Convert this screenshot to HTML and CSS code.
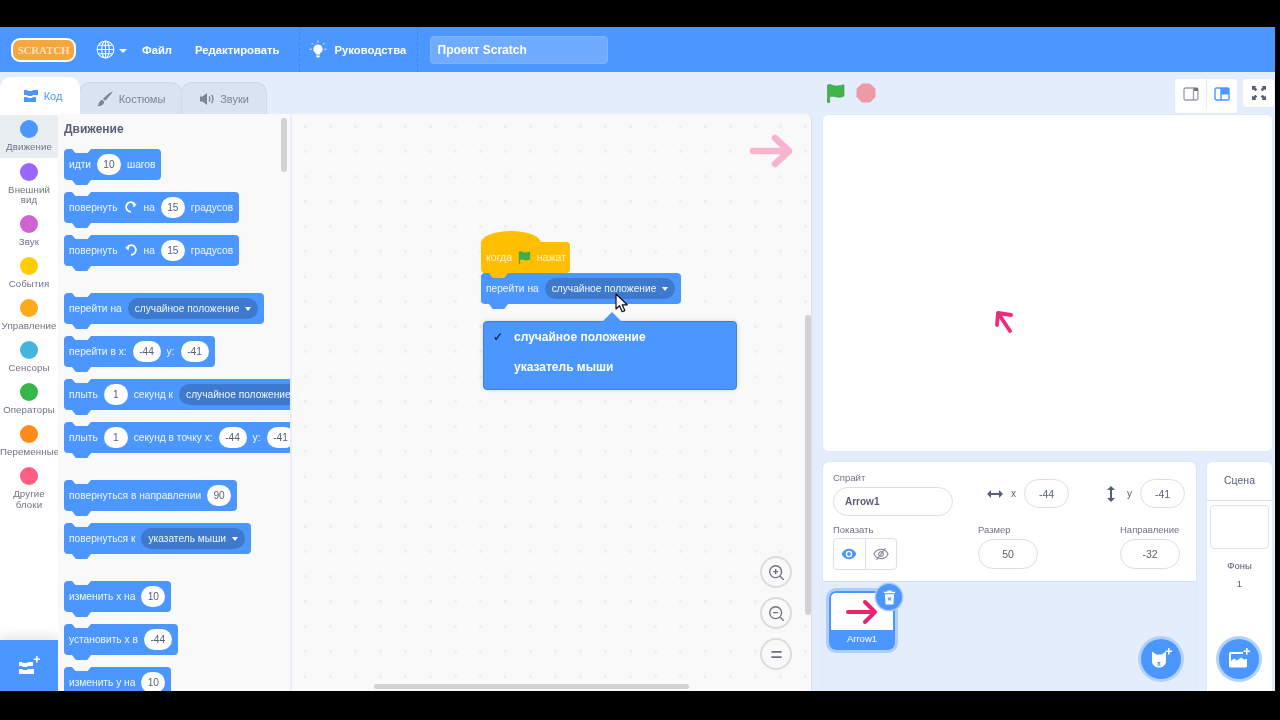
FILE: index.html
```html
<!DOCTYPE html>
<html lang="ru">
<head>
    <meta charset="UTF-8">
    <meta name="viewport" content="width=device-width, initial-scale=1.0">
    <title>Scratch</title>
    <link rel="stylesheet" href="styles.css">
</head>
<body>
<div class="app">
    <!-- Menu bar -->
    <header class="menu-bar">
        <span class="logo">SCRATCH</span>
        <span class="globe">
            <svg width="19" height="19" viewBox="0 0 20 20" fill="none" stroke="#fff" stroke-width="1.1"><circle cx="10" cy="10" r="8.8"/><ellipse cx="10" cy="10" rx="4" ry="8.8"/><path d="M10 1.2v17.6M1.2 10h17.6M2.4 5.6h15.2M2.4 14.4h15.2"/></svg>
            <i class="caret"></i>
        </span>
        <a class="menu-item file">Файл</a>
        <a class="menu-item edit">Редактировать</a>
        <div class="tutorials">
            <svg width="18" height="20" viewBox="0 0 18 20"><path d="M9 4.5a4.6 4.6 0 0 0-2.7 8.3c.6.5.7 1 .7 1.7h4c0-.7.1-1.2.7-1.7A4.6 4.6 0 0 0 9 4.5zM7.2 15.4h3.6v1.1l-.9 1h-1.8l-.9-1z" fill="#fff"/><path d="M9 .6v2M2.6 3l1.3 1.4M15.4 3l-1.3 1.4M.6 9.2h2M15.4 9.2h2" stroke="#fff" stroke-width="1"/></svg>
            <a class="menu-item">Руководства</a>
        </div>
        <div class="project-name">Проект Scratch</div>
    </header>

    <div class="workarea">
        <!-- Left: editor -->
        <section class="editor">
            <nav class="tabs">
                <a class="tab active">
                    <svg width="16" height="12" viewBox="0 0 16 12" fill="#4c97ff"><path d="M1 0h3l1 1h4l1-1h5v5H10l-1 1H5L4 5H1zM1 7h3l1 1h4l1-1h3v5H1z"/></svg>
                    Код
                </a>
                <a class="tab costumes">
                    <svg width="18" height="18" viewBox="0 0 18 18" fill="#7f8590"><path d="M16.5 1.5c.4.4-4.4 6.700-7.500 9.300l-2-2c2.700-3.100 9.100-7.700 9.500-7.300zM6.300 9.800l1.900 1.900c-.2 3.100-3.600 4.800-6.700 4.300 1.800-1.200 1-5.600 4.800-6.200z"/></svg>
                    Костюмы
                </a>
                <a class="tab sounds">
                    <svg width="16" height="14" viewBox="0 0 16 14"><path d="M1 4.500h2.500L8 1v12L3.500 9.500H1z" fill="#7f8590"/><path d="M10 4.500c1 1.400 1 3.600 0 5M12.500 3c1.700 2.300 1.700 5.700 0 8" fill="none" stroke="#7f8590" stroke-width="1.300"/></svg>
                    Звуки
                </a>
            </nav>
            <div class="editor-body">
                <aside class="categories">
                    <div class="category selected"><i class="dot motion"></i><span>Движение</span></div>
                    <div class="category"><i class="dot looks"></i><span>Внешний вид</span></div>
                    <div class="category"><i class="dot sound"></i><span>Звук</span></div>
                    <div class="category"><i class="dot events"></i><span>События</span></div>
                    <div class="category"><i class="dot control"></i><span>Управление</span></div>
                    <div class="category"><i class="dot sensing"></i><span>Сенсоры</span></div>
                    <div class="category"><i class="dot operators"></i><span>Операторы</span></div>
                    <div class="category"><i class="dot variables"></i><span>Переменные</span></div>
                    <div class="category"><i class="dot myblocks"></i><span>Другие блоки</span></div>
                    <div class="extensions">
                        <svg width="22" height="20" viewBox="0 0 22 20" fill="#fff"><path d="M1 6h3l1 1h4l1-1h5v4h-5l-1 1H5l-1-1H1zM1 13h3l1 1h4l1-1h6v5H1z"/><path d="M18 0h1.600v2.400H22V4h-2.400v2.400H18V4h-2.400V2.400H18z"/></svg>
                    </div>
                </aside>
                <div class="flyout">
                    <div class="flyout-title">Движение</div>
                    <div class="block"><span>идти</span><b class="num">10</b><span>шагов</span></div>
                    <div class="block"><span>повернуть</span>
                        <svg width="14" height="14" viewBox="0 0 16 15" fill="none" stroke="#fff" stroke-width="2"><path d="M12.500 4.500A5.500 5.500 0 1 0 8 13"/><path d="M9 1.500l5.500 3-3.500 3.500z" fill="#fff" stroke="none"/></svg>
                        <span>на</span><b class="num">15</b><span>градусов</span></div>
                    <div class="block group-end"><span>повернуть</span>
                        <svg width="14" height="14" viewBox="0 0 16 15" fill="none" stroke="#fff" stroke-width="2"><path d="M3.500 4.500A5.500 5.500 0 1 1 8 13"/><path d="M7 1.500l-5.500 3L5 8z" fill="#fff" stroke="none"/></svg>
                        <span>на</span><b class="num">15</b><span>градусов</span></div>
                    <div class="block"><span>перейти на</span><b class="drop">случайное положение<i class="caret"></i></b></div>
                    <div class="block"><span>перейти в x:</span><b class="num wide">-44</b><span>y:</span><b class="num wide">-41</b></div>
                    <div class="block"><span>плыть</span><b class="num">1</b><span>секунд к</span><b class="drop">случайное положение<i class="caret"></i></b></div>
                    <div class="block group-end"><span>плыть</span><b class="num">1</b><span>секунд в точку x:</span><b class="num wide">-44</b><span>y:</span><b class="num wide">-41</b></div>
                    <div class="block"><span>повернуться в направлении</span><b class="num">90</b></div>
                    <div class="block group-end"><span>повернуться к</span><b class="drop">указатель мыши<i class="caret"></i></b></div>
                    <div class="block"><span>изменить х на</span><b class="num">10</b></div>
                    <div class="block"><span>установить х в</span><b class="num wide">-44</b></div>
                    <div class="block"><span>изменить у на</span><b class="num">10</b></div>
                    <i class="flyout-scroll"></i>
                </div>
                <div class="workspace">
                    <svg class="ghost-arrow" width="44" height="34" viewBox="0 0 44 34" fill="none" stroke="#f6b4ce" stroke-width="6.500" stroke-linecap="round" stroke-linejoin="round"><path d="M4 17h36M26 4l14 13-14 13"/></svg>
                    <div class="script">
                        <div class="block hat"><span>когда</span>
                            <svg width="15" height="15" viewBox="0 0 16 16"><path d="M2 1.500c3-1.500 5 1.500 7.500 1 2 0 3.500-.5 5-1v8.500c-2 1.500-4 1.500-6 1-2-.7-4-1-5-.2V15.500H2z" fill="#3fae4a"/></svg>
                            <span>нажат</span></div>
                        <div class="block attached"><span>перейти на</span><b class="drop">случайное положение<i class="caret"></i></b></div>
                    </div>
                    <div class="dropdown">
                        <div class="dropdown-item"><span class="check">✓</span>случайное положение</div>
                        <div class="dropdown-item"><span class="check"></span>указатель мыши</div>
                    </div>
                    <svg class="cursor" width="14" height="20" viewBox="0 0 14 20"><path d="M1 1v15l3.600-3.300 2.600 6 2.600-1.100-2.600-5.800h5z" fill="#fff" stroke="#111" stroke-width="1.200" stroke-linejoin="round"/></svg>
                    <div class="zoom-buttons">
                        <a class="zoom-btn"><svg width="17" height="17" viewBox="0 0 20 20" fill="none" stroke="#6b7280" stroke-width="1.600"><circle cx="9" cy="9" r="7"/><path d="M14 14l4.500 4.500M9 6v6M6 9h6"/></svg></a>
                        <a class="zoom-btn"><svg width="17" height="17" viewBox="0 0 20 20" fill="none" stroke="#6b7280" stroke-width="1.600"><circle cx="9" cy="9" r="7"/><path d="M14 14l4.500 4.500M6 9h6"/></svg></a>
                        <a class="zoom-btn"><svg width="17" height="17" viewBox="0 0 20 20" fill="none" stroke="#6b7280" stroke-width="2"><path d="M4 7h12M4 13h12"/></svg></a>
                    </div>
                    <i class="scroll-v"></i>
                    <i class="scroll-h"></i>
                </div>
            </div>
        </section>

        <!-- Right: stage and sprites -->
        <section class="side">
            <div class="stage-header">
                <div class="stage-controls">
                    <svg width="20" height="20" viewBox="0 0 20 20"><path d="M1.500 2c3.500-1.500 5.500 1.500 9 1 2.500 0 5-.6 7.500-1.300V13c-3 1.400-5.500 1.500-8 .8-2.500-.6-5-1-6.300 0V19.500H1.500z" fill="#3fb54a" stroke="#2f9a3c" stroke-width=".6"/></svg>
                    <svg width="20" height="20" viewBox="0 0 20 20"><path d="M6 .500h8L19.500 6v8L14 19.500H6L.5 14V6z" fill="#ec9aa6"/></svg>
                </div>
                <div class="view-buttons">
                    <div class="btn-group">
                        <a class="view-btn"><svg width="16" height="14" viewBox="0 0 16 14" fill="none" stroke="#9a9ea8" stroke-width="1.300"><rect x="1" y="1" width="14" height="12" rx="1.500"/><path d="M10.500 1h4.500v3h-4.500z" fill="#6d717a" stroke="none"/><path d="M10.500 1v12"/></svg></a>
                        <a class="view-btn"><svg width="16" height="14" viewBox="0 0 16 14" fill="none" stroke="#4c97ff" stroke-width="1.400"><rect x="1" y="1" width="14" height="12" rx="1.500"/><path d="M7 1h8v6.500H7z" fill="#4c97ff" stroke="none"/><path d="M7 1v12"/></svg></a>
                    </div>
                    <a class="view-btn single"><svg width="14" height="14" viewBox="0 0 14 14" fill="#575e75"><path d="M0 0h4.500L3.200 1.300 5.300 3.400 3.400 5.300 1.300 3.200 0 4.500zM14 0v4.500l-1.300-1.300-2.100 2.100-1.900-1.900 2.100-2.100L9.500 0zM0 14V9.500l1.300 1.300 2.100-2.100 1.900 1.900-2.100 2.100L4.500 14zM14 14H9.500l1.300-1.300-2.100-2.100 1.900-1.900 2.100 2.100L14 9.500z"/></svg></a>
                </div>
            </div>
            <div class="stage">
                <svg class="stage-sprite" width="20" height="24" viewBox="0 0 20 24" fill="none" stroke="#ec2b7c" stroke-width="3.800" stroke-linecap="round" stroke-linejoin="round"><path d="M15 21L3 3M2 15L3 3 16 5"/></svg>
            </div>
            <div class="bottom-row">
                <div class="sprite-panel">
                    <div class="sprite-info">
                        <div class="info-row">
                            <label class="field name-field"><span class="field-label">Спрайт</span><span class="pill name-pill">Arrow1</span></label>
                            <div class="coord x-coord">
                                <svg width="16" height="10" viewBox="0 0 16 10" fill="#575e75"><path d="M0 5l4-4v3h8V1l4 4-4 4V6H4v3z"/></svg>
                                <span class="axis">x</span><span class="pill coord-pill">-44</span>
                            </div>
                            <div class="coord y-coord">
                                <svg width="10" height="16" viewBox="0 0 10 16" fill="#575e75"><path d="M5 0l4 4H6v8h3l-4 4-4-4h3V4H1z"/></svg>
                                <span class="axis">y</span><span class="pill coord-pill">-41</span>
                            </div>
                        </div>
                        <div class="info-row second">
                            <div class="field show-field">
                                <span class="field-label">Показать</span>
                                <div class="show-buttons">
                                    <a class="show-btn"><svg width="16" height="12" viewBox="0 0 16 12"><path d="M8 .800C4.500.8 1.800 3.200.6 6c1.200 2.800 3.900 5.200 7.400 5.200s6.200-2.400 7.400-5.200C14.200 3.200 11.500.8 8 .8z" fill="#4c97ff"/><circle cx="8" cy="6" r="3.200" fill="#fff"/><circle cx="8" cy="6" r="1.900" fill="#4c97ff"/></svg></a>
                                    <a class="show-btn"><svg width="16" height="14" viewBox="0 0 16 14" fill="none" stroke="#8b8f99" stroke-width="1.200"><path d="M1 7c1.200-2.700 3.800-4.700 7-4.700S13.800 4.300 15 7c-1.200 2.700-3.800 4.700-7 4.700S2.200 9.700 1 7z"/><circle cx="8" cy="7" r="2.300"/><path d="M12.500 1L3.500 13"/></svg></a>
                                </div>
                            </div>
                            <label class="field size-field"><span class="field-label">Размер</span><span class="pill wide-pill">50</span></label>
                            <label class="field dir-field"><span class="field-label">Направление</span><span class="pill wide-pill">-32</span></label>
                        </div>
                    </div>
                    <div class="sprite-list">
                        <div class="sprite-tile">
                            <div class="tile-thumb">
                                <svg width="32" height="26" viewBox="0 0 32 26" fill="none" stroke="#e8246f" stroke-width="4" stroke-linecap="round" stroke-linejoin="round"><path d="M2 13h27M19 3l10 10-10 10"/></svg>
                            </div>
                            <div class="tile-name">Arrow1</div>
                            <a class="tile-delete">
                                <svg width="13" height="15" viewBox="0 0 14 16" fill="#fff"><path d="M5 .500h4l.6 1.300H13v1.700H1V1.800h3.400zM2 4.500h10l-.8 11H2.800z"/><path d="M5.300 7.800l3.400 3.400M8.700 7.800l-3.400 3.400" stroke="#4c97ff" stroke-width="1.200"/></svg>
                            </a>
                        </div>
                        <a class="fab sprite-fab">
                            <svg width="24" height="24" viewBox="0 0 24 24" fill="#fff"><path d="M3 4.500l4.500 3h5L17 4.500V14c0 4-3 6.500-7 6.500S3 18 3 14z"/><path d="M8 15h4l-1.400 1.600v1.200h1.400v.8H8v-.8h1.400v-1.200z" fill="#4c97ff"/><path d="M19 1h1.600v2.400H23V5h-2.400v2.400H19V5h-2.400V3.400H19z"/></svg>
                        </a>
                    </div>
                </div>
                <div class="scene-panel">
                    <div class="scene-title">Сцена</div>
                    <div class="scene-thumb"></div>
                    <div class="scene-label">Фоны</div>
                    <div class="scene-label count">1</div>
                    <a class="fab scene-fab">
                        <svg width="24" height="24" viewBox="0 0 24 24" fill="#fff"><path d="M2 6.500A1.500 1.500 0 0 1 3.500 5H16v2H4v7l3-2.500 3 2 4-3 4 2.500v-1h2V19a1.500 1.500 0 0 1-1.500 1.500h-15A1.500 1.500 0 0 1 2 19z"/><path d="M19 1h1.600v2.400H23V5h-2.400v2.400H19V5h-2.400V3.400H19z"/></svg>
                    </a>
                </div>
            </div>
        </section>
    </div>
</div>
</body>
</html>
```

FILE: styles.css
```css
* {
    box-sizing: border-box;
}
html, body {
    margin: 0;
    height: 100%;
    background: #000;
    overflow: hidden;
}
body {
    font-family: "Liberation Sans", Arial, sans-serif;
    color: #575e75;
}
a {
    display: flex;
    align-items: center;
    justify-content: center;
}
i {
    display: block;
}
.app {
    width: 1275px;
    height: 664px;
    margin-top: 27px;
    background: #e3edfc;
    display: flex;
    flex-direction: column;
    overflow: hidden;
    filter: blur(.5px);
}

/* menu bar */
.menu-bar {
    height: 45px;
    flex: none;
    background: #4c97ff;
    color: #fff;
    display: flex;
    align-items: center;
    font-size: 11.300px;
    font-weight: bold;
}
.logo {
    margin-left: 11px;
    width: 65px;
    height: 24px;
    border: 2px solid #fff;
    border-radius: 9px;
    background: #f5a63f;
    color: #fde3b8;
    font-family: "Liberation Serif", serif;
    font-size: 11px;
    letter-spacing: -.2px;
    display: flex;
    align-items: center;
    justify-content: center;
}
.globe {
    margin-left: 20px;
    display: flex;
    align-items: center;
    gap: 4px;
}
.caret {
    width: 0;
    height: 0;
    border-left: 4px solid transparent;
    border-right: 4px solid transparent;
    border-top: 4.5px solid #fff;
    margin-top: 2px;
}
.menu-item.file {
    margin-left: 15px;
}
.menu-item.edit {
    margin-left: 23px;
}
.tutorials {
    margin-left: 19px;
    width: 119px;
    height: 45px;
    padding-left: 9px;
    border-left: 1px dashed #3f86e6;
    border-right: 1px dashed #3f86e6;
    display: flex;
    align-items: center;
    gap: 8px;
}
.project-name {
    margin-left: 12px;
    width: 178px;
    height: 28px;
    padding-left: 7px;
    line-height: 26px;
    font-size: 12px;
    border-radius: 4px;
    background: #6fabff;
    border: 1px solid #7db3fb;
}

/* main area */
.workarea {
    flex: 1;
    display: flex;
    min-height: 0;
}
.editor {
    width: 812px;
    flex: none;
    display: flex;
    flex-direction: column;
}
.tabs {
    height: 42px;
    flex: none;
    display: flex;
    align-items: flex-end;
    font-size: 11px;
}
.tab {
    height: 32px;
    border: 1px solid #cfd8e6;
    border-bottom: none;
    border-radius: 11px 11px 0 0;
    background: #d9e3f2;
    color: #7f8590;
    gap: 5px;
    margin-left: -1px;
}
.tab.active {
    width: 80px;
    height: 37px;
    margin-left: 0;
    background: #fff;
    color: #4c97ff;
    border-color: #fff;
    position: relative;
    z-index: 1;
    padding-left: 5px;
}
.tab.costumes {
    width: 103px;
}
.tab.sounds {
    width: 86px;
}
.editor-body {
    flex: 1;
    display: flex;
    min-height: 0;
}

/* categories */
.categories {
    width: 58px;
    flex: none;
    background: #fff;
    position: relative;
    padding-top: 1px;
    font-size: 9.700px;
    color: #6e7386;
    text-align: center;
}
.category {
    padding: 5px 0 4.600px;
    display: flex;
    flex-direction: column;
    align-items: center;
}
.category span {
    margin-top: 4px;
    line-height: 10.400px;
    max-width: 58px;
    letter-spacing: .1px;
}
.category.selected {
    background: #e9eef2;
    height: 43px;
}
.dot {
    width: 18px;
    height: 18px;
    border-radius: 50%;
}
.motion { background: #4c97ff; }
.looks { background: #9966ff; }
.sound { background: #cf63cf; }
.events { background: #ffcc00; }
.control { background: #ffab19; }
.sensing { background: #45b5dc; }
.operators { background: #38b54a; }
.variables { background: #ff8c1a; }
.myblocks { background: #ff5f82; }
.extensions {
    position: absolute;
    left: 0;
    right: 0;
    bottom: 0;
    height: 51px;
    background: #4c97ff;
    display: flex;
    align-items: center;
    justify-content: center;
    box-shadow: 0 -6px 8px rgba(0, 0, 0, .08);
}

/* palette */
.flyout {
    width: 234px;
    flex: none;
    background: #f9f9f9;
    border-right: 2px solid #e8eef8;
    position: relative;
    overflow: hidden;
    padding-left: 6px;
    display: flex;
    flex-direction: column;
    align-items: flex-start;
}
.flyout-title {
    height: 35px;
    flex: none;
    line-height: 30px;
    font-size: 12px;
    font-weight: bold;
    color: #575e75;
}
.flyout-scroll {
    position: absolute;
    top: 4px;
    right: 3px;
    width: 6px;
    height: 54px;
    border-radius: 3px;
    background: #d2d2d2;
}

/* blocks */
.block {
    position: relative;
    flex: none;
    height: 31px;
    margin-bottom: 12px;
    padding: 0 6px 1px 5px;
    border-radius: 4px;
    background: #4c97ff;
    color: #f0f6ff;
    font-size: 10.200px;
    display: flex;
    align-items: center;
    gap: 6px;
    white-space: nowrap;
}
.block::before {
    content: "";
    position: absolute;
    top: 0;
    left: 8px;
    width: 19px;
    height: 4px;
    background: #f9f9f9;
    clip-path: polygon(0 0, 100% 0, 82% 100%, 18% 100%);
}
.block::after {
    content: "";
    position: absolute;
    bottom: -5px;
    left: 8px;
    width: 19px;
    height: 5px;
    background: #4c97ff;
    clip-path: polygon(0 0, 100% 0, 80% 100%, 20% 100%);
}
.block.group-end {
    margin-bottom: 27px;
}
.num {
    height: 21px;
    width: 24px;
    border-radius: 11px;
    background: #fff;
    color: #575e75;
    font-weight: normal;
    display: flex;
    align-items: center;
    justify-content: center;
}
.num.wide {
    width: 28px;
}
.drop {
    height: 21px;
    padding: 0 7px;
    border-radius: 11px;
    background: #3d79cc;
    color: #f0f6ff;
    font-weight: normal;
    display: flex;
    align-items: center;
    gap: 6px;
}
.drop .caret {
    border-left-width: 3.500px;
    border-right-width: 3.500px;
    border-top-width: 4px;
    margin-top: 1px;
}

/* workspace */
.workspace {
    flex: 1;
    position: relative;
    overflow: hidden;
    background-color: #f9f9f9;
    background-image: radial-gradient(circle, #ececec 1.200px, transparent 1.600px);
    background-size: 25px 25px;
    background-position: 1px 0;
    border-right: 1px solid #d4dfef;
    border-radius: 0 6px 0 0;
}
.ghost-arrow {
    position: absolute;
    left: 457px;
    top: 20px;
}
.script {
    position: absolute;
    left: 189px;
    top: 128px;
    display: flex;
    flex-direction: column;
    align-items: flex-start;
}
.block.hat {
    width: 89px;
    margin-bottom: 0;
    background: #ffbf00;
    color: #fff2c6;
    font-size: 10.600px;
    padding-right: 4px;
    gap: 5px;
    border-radius: 0 4px 4px 4px;
}
.block.hat::before {
    top: -11px;
    left: 0;
    width: 60px;
    height: 12px;
    background: #ffbf00;
    border-radius: 50% 50% 0 0 / 100% 100% 0 0;
    clip-path: none;
}
.block.hat::after {
    background: #ffbf00;
    z-index: 1;
}
.block.attached {
    margin-bottom: 0;
}
.block.attached::before {
    display: none;
}
.dropdown {
    position: absolute;
    left: 191px;
    top: 207px;
    width: 254px;
    height: 69px;
    border: 1px solid #3f80de;
    border-radius: 4px;
    background: #4c97ff;
    color: #fff;
    font-size: 12px;
    font-weight: bold;
    box-shadow: 0 0 4px rgba(0, 0, 0, .15);
}
.dropdown::before {
    content: "";
    position: absolute;
    left: 118px;
    top: -10px;
    width: 20px;
    height: 10px;
    background: #4c97ff;
    clip-path: polygon(50% 0, 100% 100%, 0 100%);
}
.dropdown-item {
    height: 30px;
    display: flex;
    align-items: center;
}
.check {
    width: 30px;
    padding-left: 9px;
    color: #152a55;
    font-size: 12px;
}
.cursor {
    position: absolute;
    left: 323px;
    top: 179px;
}
.zoom-buttons {
    position: absolute;
    left: 468px;
    top: 442px;
    display: flex;
    flex-direction: column;
    gap: 9px;
}
.zoom-btn {
    width: 32px;
    height: 32px;
    border: 2px solid #dcdcdc;
    border-radius: 50%;
    background: #f9f9f9;
}
.scroll-v {
    position: absolute;
    left: 513px;
    top: 201px;
    width: 6px;
    height: 300px;
    border-radius: 3px;
    background: #d2d2d2;
}
.scroll-h {
    position: absolute;
    left: 82px;
    bottom: 2px;
    width: 315px;
    height: 5px;
    border-radius: 3px;
    background: #d2d2d2;
}

/* stage */
.side {
    flex: 1;
    padding-left: 10px;
    display: flex;
    flex-direction: column;
    min-width: 0;
}
.stage-header {
    height: 42px;
    flex: none;
    padding-top: 6px;
    display: flex;
    justify-content: space-between;
}
.stage-controls {
    display: flex;
    gap: 10px;
    align-items: center;
    height: 30px;
    margin-left: 4px;
}
.view-buttons {
    display: flex;
    gap: 4px;
}
.btn-group {
    display: flex;
    background: #fff;
    border-radius: 4px;
    border: 1px solid #e3ebf6;
}
.view-btn {
    width: 31px;
    height: 30px;
}
.btn-group .view-btn + .view-btn {
    border-left: 1px solid #e3ebf6;
}
.view-btn.single {
    width: 33px;
    background: #fff;
    border-radius: 4px;
    border: 1px solid #e3ebf6;
}
.stage {
    height: 338px;
    flex: none;
    margin-right: 2px;
    background: #fff;
    border: 1px solid #dfe8f5;
    border-radius: 6px;
    position: relative;
}
.stage-sprite {
    position: absolute;
    left: 172px;
    top: 195px;
}

/* sprite panel */
.bottom-row {
    flex: 1;
    min-height: 0;
    display: flex;
    margin-top: 9px;
    gap: 9px;
}
.sprite-panel {
    width: 375px;
    flex: none;
    background: #e3edfc;
    border: 1px solid #dfe8f5;
    border-radius: 6px 6px 0 0;
    border-bottom: none;
    display: flex;
    flex-direction: column;
}
.sprite-info {
    height: 120px;
    flex: none;
    background: #fff;
    border-bottom: 1px solid #d7e1f0;
    border-radius: 6px 6px 0 0;
    padding: 9px 0 0 10px;
    font-size: 9.500px;
}
.info-row {
    display: flex;
}
.info-row.second {
    margin-top: 7px;
}
.field {
    display: flex;
    flex-direction: column;
}
.field-label {
    height: 16px;
    line-height: 13px;
    color: #6e7386;
}
.pill {
    height: 29px;
    border: 1px solid #dcdfe5;
    border-radius: 15px;
    background: #fff;
    font-size: 10.500px;
    display: flex;
    align-items: center;
    justify-content: center;
}
.name-pill {
    width: 120px;
    justify-content: flex-start;
    padding-left: 11px;
    font-weight: bold;
    font-size: 10px;
}
.coord {
    display: flex;
    align-items: center;
    height: 29px;
    margin-top: 8px;
}
.x-coord {
    margin-left: 34px;
}
.y-coord {
    margin-left: 37px;
}
.coord .axis {
    margin: 0 7px 0 8px;
    font-size: 10px;
    width: 6px;
}
.y-coord .axis {
    margin-left: 11px;
}
.coord-pill {
    width: 45px;
}
.show-field {
    width: 145px;
}
.show-buttons {
    display: flex;
    width: 64px;
    height: 32px;
    border: 1px solid #dcdfe5;
    border-radius: 4px;
    margin-top: -1px;
}
.show-btn {
    flex: 1;
}
.show-btn + .show-btn {
    border-left: 1px solid #dcdfe5;
}
.size-field {
    width: 142px;
}
.wide-pill {
    width: 60px;
    height: 30px;
}
.dir-field .field-label {
    white-space: nowrap;
}
.sprite-list {
    flex: 1;
    position: relative;
}
.sprite-tile {
    position: absolute;
    left: 6px;
    top: 9px;
    width: 66px;
    height: 59px;
    border: 2px solid #4c97ff;
    border-radius: 7px;
    box-shadow: 0 0 0 3px #b0cdf7;
    display: flex;
    flex-direction: column;
}
.tile-thumb {
    flex: 1;
    background: #fff;
    border-radius: 5px 5px 0 0;
    display: flex;
    align-items: center;
    justify-content: center;
}
.tile-name {
    height: 18px;
    flex: none;
    background: #4c97ff;
    color: #fff;
    font-size: 9.500px;
    line-height: 17px;
    text-align: center;
}
.tile-delete {
    position: absolute;
    left: 45px;
    top: -9px;
    width: 26px;
    height: 26px;
    border-radius: 50%;
    background: #4c97ff;
    box-shadow: 0 0 0 1.500px #b0cdf7;
}
.fab {
    position: absolute;
    width: 40px;
    height: 40px;
    border-radius: 50%;
    background: #4c97ff;
    box-shadow: 0 0 0 3px #b3d1f9;
}
.sprite-fab {
    left: 318px;
    top: 57px;
}

/* scene panel */
.scene-panel {
    width: 67px;
    flex: none;
    margin-right: 2px;
    background: #fff;
    border: 1px solid #dfe8f5;
    border-radius: 6px 6px 0 0;
    border-bottom: none;
    position: relative;
    text-align: center;
    font-size: 9.500px;
}
.scene-title {
    height: 39px;
    line-height: 37px;
    font-size: 10.500px;
    border-bottom: 1px solid #d7e1f0;
}
.scene-thumb {
    width: 59px;
    height: 44px;
    margin: 4px auto 0;
    border: 1px solid #dde1e8;
    border-radius: 4px;
    background: #fff;
}
.scene-label {
    margin-top: 12px;
    line-height: 10px;
}
.scene-label.count {
    margin-top: 8px;
}
.scene-fab {
    left: 12px;
    top: 177px;
}
```
